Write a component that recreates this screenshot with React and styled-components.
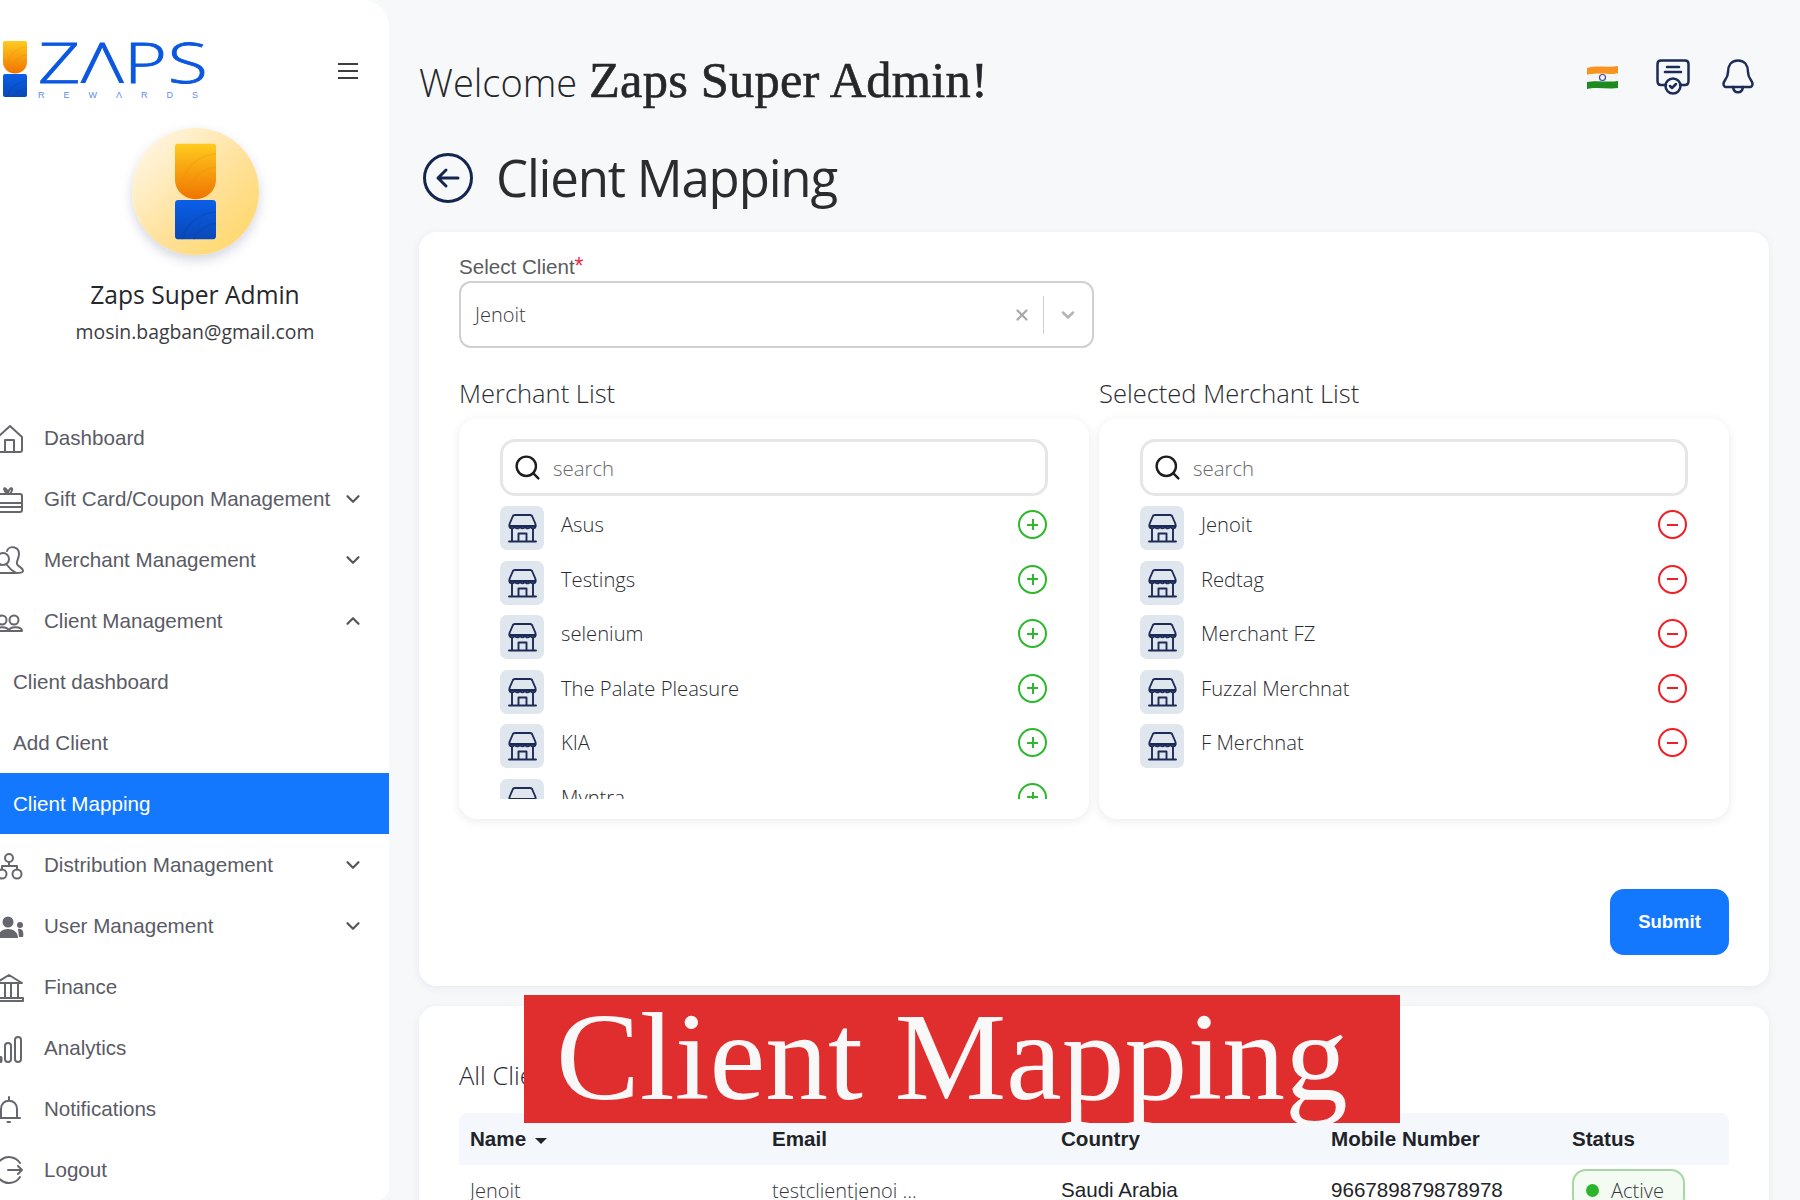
import React from 'react';
import styled, { createGlobalStyle } from 'styled-components';
import { X, ChevronDown, ChevronUp, Search } from 'lucide-react';

const GlobalStyle = createGlobalStyle`
  html, body {
    margin: 0;
    padding: 0;
    height: 1200px;
    overflow: hidden;
    background: #f7f8fa;
  }
  * { box-sizing: border-box; }
`;

const OPEN = `'Open Sans', 'Noto Sans', sans-serif`;
const ARIAL = `'Liberation Sans', Arial, sans-serif`;
const SERIF = `'Liberation Serif', 'Times New Roman', serif`;

const Page = styled.div`
  position: relative;
  display: flex;
  width: 1800px;
  height: 1200px;
  overflow: hidden;
  background: #f7f8fa;
`;

const Sidebar = styled.aside`
  flex: 0 0 389px;
  height: 1200px;
  background: #fff;
  border-radius: 0 26px 12px 0;
  overflow: hidden;
`;

const LogoRow = styled.div`
  display: flex;
  justify-content: space-between;
  align-items: flex-start;
  height: 128px;
  padding: 41px 31px 0 3px;
`;

const Logo = styled.div`
  display: flex;
  gap: 11px;
`;

const LogoWords = styled.div`
  display: flex;
  flex-direction: column;
  width: 166px;
`;

const LogoName = styled.div`
  height: 50px;
  font-family: ${OPEN};
  font-weight: 300;
  font-size: 56px;
  line-height: 41px;
  letter-spacing: 0.5px;
  color: #0b57e0;
  -webkit-text-stroke: 0.8px #0b57e0;
  transform: scaleX(1.31);
  transform-origin: left center;
`;

const LogoSub = styled.div`
  display: flex;
  justify-content: space-between;
  padding-right: 6px;
  font-family: ${ARIAL};
  font-size: 9px;
  line-height: 9px;
  color: #5f8ce8;
`;

const MenuButton = styled.button`
  display: flex;
  flex-direction: column;
  gap: 5px;
  width: 20px;
  margin-top: 22px;
  padding: 0;
  border: none;
  background: none;
  span {
    display: block;
    height: 2px;
    background: #3c3d42;
  }
`;

const Profile = styled.div`
  display: flex;
  flex-direction: column;
  align-items: center;
  height: 279px;
  padding-left: 1px;
`;

const Avatar = styled.div`
  display: flex;
  flex-direction: column;
  align-items: center;
  justify-content: center;
  width: 127px;
  height: 127px;
  border-radius: 50%;
  background: linear-gradient(135deg, #fff8ea 5%, #ffe19a 55%, #ffd766 95%);
  box-shadow: 0 5px 12px rgba(60, 70, 120, 0.22);
`;

const ProfileName = styled.div`
  margin-top: 22px;
  font-family: ${OPEN};
  font-size: 24.6px;
  line-height: 36px;
  color: #26272b;
`;

const ProfileEmail = styled.div`
  margin-top: 2px;
  font-family: ${OPEN};
  font-size: 19.4px;
  line-height: 34px;
  color: #3c3d42;
`;

const NavRow = styled.div`
  display: flex;
  align-items: center;
  height: 61px;
  padding: 0 25px 0 ${p => (p.$sub ? '13px' : '0')};
  font-family: ${ARIAL};
  font-size: 20.6px;
  color: ${p => (p.$active ? '#fff' : '#5a5b65')};
  background: ${p => (p.$active ? '#1478ff' : 'transparent')};
`;

const NavIcon = styled.svg`
  flex: 0 0 28px;
  width: 28px;
  height: 30px;
  margin: 0 21px 0 -5px;
  overflow: visible;
  fill: none;
  stroke: #66676d;
  stroke-width: 2;
  stroke-linecap: round;
  stroke-linejoin: round;
`;

const NavLabel = styled.span`
  flex: 1;
  white-space: nowrap;
`;

const Main = styled.main`
  flex: 1;
  min-width: 0;
  padding: 0 31px 0 30px;
`;

const TopBar = styled.header`
  display: flex;
  justify-content: space-between;
  align-items: flex-start;
  height: 152px;
  padding-top: 47px;
`;

const Welcome = styled.h1`
  margin: 0;
  font-family: ${OPEN};
  font-size: 38px;
  font-weight: 300;
  line-height: 66px;
  color: #26272b;
  white-space: nowrap;
`;

const WelcomeName = styled.span`
  margin-left: 2px;
  font-family: ${SERIF};
  font-size: 50.5px;
  font-weight: 400;
  letter-spacing: 0.2px;
  -webkit-text-stroke: 0.6px #26272b;
`;

const TopIcons = styled.div`
  display: flex;
  align-items: center;
  gap: 32px;
  padding: 12px 15px 0 0;
`;

const FlagSlot = styled.span`
  display: flex;
  margin-right: 5px;
`;

const TitleRow = styled.div`
  display: flex;
  align-items: center;
  gap: 23px;
  height: 52px;
  padding-left: 4px;
  margin-bottom: 28px;
`;

const PageTitle = styled.h2`
  margin: -3px 0 0;
  font-family: ${OPEN};
  font-size: 51px;
  font-weight: 400;
  line-height: 52px;
  letter-spacing: -1.2px;
  color: #2b2c30;
`;

const Card = styled.section`
  background: #fff;
  border-radius: 18px;
  box-shadow: 0 2px 8px rgba(40, 50, 80, 0.07);
`;

const FormCard = styled(Card)`
  height: 754px;
  padding: 22px 40px 30px;
  margin-bottom: 20px;
`;

const FieldLabel = styled.label`
  display: block;
  height: 27px;
  font-family: ${ARIAL};
  font-size: 20.6px;
  line-height: 24px;
  color: #5c5c60;
  em {
    font-style: normal;
    font-size: 23px;
    color: #ee2b4a;
  }
`;

const SelectBox = styled.div`
  display: flex;
  align-items: center;
  width: 635px;
  height: 67px;
  padding: 0 14px;
  border: 2px solid #d0d0d2;
  border-radius: 12px;
  font-family: ${OPEN};
  font-size: 20px;
  font-weight: 300;
  color: #3c3c40;
`;

const SelectValue = styled.span`
  flex: 1;
`;

const SelectDivider = styled.span`
  width: 1px;
  height: 38px;
  margin: 0 14px 0 12px;
  background: #cfcfd2;
`;

const Columns = styled.div`
  display: grid;
  grid-template-columns: 630px 630px;
  gap: 10px;
  margin-top: 27px;
`;

const ColumnTitle = styled.h3`
  margin: 0 0 8px;
  font-family: ${OPEN};
  font-size: 25.5px;
  font-weight: 300;
  line-height: 36px;
  color: #2b2c30;
`;

const Panel = styled.div`
  height: 400px;
  padding: 20px 41px;
  background: #fff;
  border-radius: 18px;
  box-shadow: 0 2px 10px rgba(40, 50, 80, 0.1);
`;

const SearchBox = styled.div`
  display: flex;
  align-items: center;
  gap: 11px;
  height: 57px;
  padding: 0 10px;
  border: 3px solid #e6e6e8;
  border-radius: 15px;
  font-family: ${OPEN};
  font-size: 20.4px;
  font-weight: 300;
  color: #68686c;
`;

const MerchantList = styled.ul`
  display: flex;
  flex-direction: column;
  gap: 10.6px;
  height: 293px;
  margin: 10px 0 0;
  padding: 0;
  list-style: none;
  overflow: hidden;
`;

const MerchantRow = styled.li`
  display: flex;
  flex: 0 0 44px;
  align-items: flex-start;
`;

const StoreTile = styled.div`
  display: flex;
  align-items: center;
  justify-content: center;
  flex: 0 0 44px;
  height: 44px;
  border-radius: 7px;
  background: #e0e6ee;
`;

const MerchantName = styled.span`
  flex: 1;
  padding: 4px 0 0 17px;
  font-family: ${OPEN};
  font-size: 20.2px;
  font-weight: 300;
  line-height: 28px;
  color: #2b2c30;
`;

const RoundAction = styled.div`
  display: flex;
  align-items: center;
  justify-content: center;
  width: 29px;
  height: 29px;
  margin: 4px 1px 0 0;
  border: 2px solid ${p => p.$color};
  border-radius: 50%;
  span {
    position: relative;
    display: block;
    width: 11px;
    height: 2px;
    background: ${p => p.$color};
  }
  span::after {
    content: '';
    position: absolute;
    display: ${p => (p.$plus ? 'block' : 'none')};
    left: 4.5px;
    top: -4.5px;
    width: 2px;
    height: 11px;
    background: ${p => p.$color};
  }
`;

const SubmitRow = styled.div`
  display: flex;
  justify-content: flex-end;
  margin-top: 70px;
`;

const SubmitButton = styled.button`
  width: 119px;
  height: 66px;
  border: none;
  border-radius: 14px;
  background: #1478ff;
  color: #fff;
  font-family: ${ARIAL};
  font-size: 18.5px;
  font-weight: 700;
`;

const TableCard = styled(Card)`
  height: 400px;
  padding: 51px 40px 0;
`;

const TableTitle = styled.h3`
  margin: 0 0 20px;
  font-family: ${OPEN};
  font-size: 25.5px;
  font-weight: 300;
  line-height: 36px;
  color: #2b2c30;
`;

const TableGrid = styled.div`
  display: grid;
  grid-template-columns: 302px 289px 270px 241px 1fr;
  align-items: center;
  height: ${p => (p.$head ? '52px' : '50px')};
  padding-left: 11px;
  background: ${p => (p.$head ? '#f4f8fd' : '#fff')};
  border-radius: ${p => (p.$head ? '8px 8px 0 0' : '0')};
  font-family: ${ARIAL};
  font-size: 20.6px;
  font-weight: ${p => (p.$head ? 700 : 400)};
  color: #222327;
`;

const NameCell = styled.span`
  display: flex;
  align-items: center;
  gap: 9px;
`;

const SortCaret = styled.i`
  width: 0;
  height: 0;
  margin-top: 3px;
  border: 6px solid transparent;
  border-top: 6px solid #222327;
  border-bottom: none;
`;

const LightCell = styled.span`
  font-family: ${OPEN};
  font-size: 20px;
  font-weight: 300;
  color: #36373b;
`;

const StatusPill = styled.span`
  display: inline-flex;
  align-items: center;
  gap: 12px;
  width: 113px;
  height: 42px;
  padding-left: 12px;
  border: 2px solid #a6d8a6;
  border-radius: 14px;
  background: #f3fbf3;
  font-family: ${OPEN};
  font-size: 20px;
  font-weight: 300;
  color: #36373b;
  i {
    width: 13px;
    height: 13px;
    border-radius: 50%;
    background: #2bb52b;
  }
`;

const Banner = styled.div`
  position: absolute;
  left: 524px;
  top: 995px;
  width: 876px;
  height: 128px;
  padding-left: 32px;
  overflow: hidden;
  background: #e02d2d;
  font-family: ${SERIF};
  font-size: 125.6px;
  line-height: 124px;
  color: #f8f8f8;
  white-space: nowrap;
`;

const icons = {
  home: <><path d="M3 14 L15 3 L27 14 V27 Q27 29 25 29 H5 Q3 29 3 27 Z" /><path d="M10 29 V17 H19 V29" /></>,
  gift: <><rect x="1" y="10" width="26" height="18" rx="2" /><path d="M1 19 H27 M1 23 H27" /><path d="M12 10 C6 3 11 2 13 9 C15 2 20 3 15 10" /></>,
  merchant: <><path d="M12 6 C14 0 24 1 24 9 C24 14 21 16 22 19 C23 22 28 22 28 26 C28 28 24 28 21 28" /><circle cx="8" cy="14" r="6" /><path d="M0 27 C2 23 3 22 5 20 M12 20 C15 24 17 26 21 28 H2" /></>,
  client: <><circle cx="7" cy="14" r="4.5" /><circle cx="19" cy="14" r="4.5" /><path d="M1 25 C1 20 13 20 14 25 Z" /><path d="M14 25 C14 20 27 20 27 25 Z" /></>,
  network: <><circle cx="14" cy="8" r="4" /><circle cx="7" cy="24" r="4.5" /><circle cx="22" cy="24" r="4.5" /><path d="M14 12 V16 M7 19.5 V16 H22 V19.5" /></>,
  users: <g fill="#66676d" stroke="none"><circle cx="13" cy="11" r="5.5" /><circle cx="25" cy="14" r="3" /><circle cx="2" cy="14" r="3" /><path d="M3 27 C3 15 23 15 23 27 Z" /><path d="M23 18 C28 17 29 22 28 26 H24 Z" /></g>,
  bank: <><path d="M1 11 L14 3 L27 11 Z" /><path d="M4 12 V25 M10 12 V25 M16 12 V25 M23 12 V25" /><path d="M1 26 H28 V29 H1 Z" /></>,
  bars: <><rect x="5" y="24" width="1.5" height="5" rx="0.75" /><rect x="10" y="10" width="6" height="19" rx="3" /><rect x="20" y="4" width="6" height="25" rx="3" /></>,
  bell: <><path d="M3 24 H25 M6 24 V15 C6 4 22 4 22 15 V24" /><path d="M14 3 V6 M12.5 28 H15" /></>,
  logout: <><path d="M25 8 A13 13 0 1 0 25 22" /><path d="M13 15 H27 M23 11 L27 15 L23 19" /></>
};

const navItems = [
  { label: 'Dashboard', icon: 'home' },
  { label: 'Gift Card/Coupon Management', icon: 'gift', caret: 'down' },
  { label: 'Merchant Management', icon: 'merchant', caret: 'down' },
  { label: 'Client Management', icon: 'client', caret: 'up' },
  { label: 'Client dashboard', sub: true },
  { label: 'Add Client', sub: true },
  { label: 'Client Mapping', sub: true, active: true },
  { label: 'Distribution Management', icon: 'network', caret: 'down' },
  { label: 'User Management', icon: 'users', caret: 'down' },
  { label: 'Finance', icon: 'bank' },
  { label: 'Analytics', icon: 'bars' },
  { label: 'Notifications', icon: 'bell' },
  { label: 'Logout', icon: 'logout' }
];

const merchants = ['Asus', 'Testings', 'selenium', 'The Palate Pleasure', 'KIA', 'Myntra'];
const selectedMerchants = ['Jenoit', 'Redtag', 'Merchant FZ', 'Fuzzal Merchnat', 'F Merchnat'];

const BrandMark = ({ width, height }) => (
  <svg width={width} height={height} viewBox="0 0 24 56">
    <defs>
      <linearGradient id="markTop" x1="0" y1="0" x2="0" y2="1">
        <stop offset="0" stopColor="#ffcb1f" />
        <stop offset="1" stopColor="#ef7400" />
      </linearGradient>
      <linearGradient id="markBottom" x1="0" y1="0" x2="0" y2="1">
        <stop offset="0" stopColor="#0a5fe8" />
        <stop offset="1" stopColor="#0a48b8" />
      </linearGradient>
    </defs>
    <path d="M1.5 0 H22.5 Q24 0 24 1.5 V21 C24 28 18 32.5 12 32.5 C6 32.5 0 28 0 21 V1.5 Q0 0 1.5 0 Z" fill="url(#markTop)" />
    <path d="M24 6 C16 6 7 12 3 24 M24 14 C18 14 11 18 8 28" fill="none" stroke="#e88a00" strokeOpacity="0.18" strokeWidth="1.2" />
    <rect x="0" y="33" width="24" height="23" rx="2" fill="url(#markBottom)" />
    <path d="M24 40 C16 40 7 46 4 56 M24 47 C19 47 13 51 11 56" fill="none" stroke="#0a3c9c" strokeOpacity="0.25" strokeWidth="1.2" />
  </svg>
);

const StoreIcon = () => (
  <svg width="29" height="30" viewBox="0 0 29 30" fill="none" stroke="#1c2b57" strokeWidth="1.9" strokeLinecap="round" strokeLinejoin="round">
    <path d="M7 2 H22 Q24 2 24.5 4 L27.5 11 V13 H1.5 V11 L4.5 4 Q5 2 7 2 Z" />
    <path d="M1.5 13 C1.5 16 6.5 16 6.7 13 C7 16 11.5 16 11.9 13 C12.2 16 16.8 16 17.1 13 C17.5 16 22 16 22.3 13 C22.5 16 27.5 16 27.5 13" />
    <path d="M4 16 V28.5 M25 16 V28.5 M1 28.5 H28 M10.5 28.5 V20.5 H18.5 V28.5" />
  </svg>
);

const FlagIcon = () => (
  <svg width="33" height="24" viewBox="0 0 33 24">
    <path d="M1 3 C10 0 22 3 32 1 V8.5 C22 10 10 7.5 1 10 Z" fill="#f79420" />
    <path d="M1 10 C10 7.5 22 10 32 8.5 V16 C22 17.5 10 15 1 17 Z" fill="#f4f4f4" />
    <path d="M1 17 C10 15 22 17.5 32 16 V23 C22 24.5 10 21.5 1 24 Z" fill="#1f8a1f" />
    <circle cx="16.5" cy="12.5" r="3" fill="none" stroke="#3b4aa8" strokeWidth="1.2" />
  </svg>
);

const CertIcon = () => (
  <svg width="34" height="36" viewBox="0 0 34 36" fill="none" stroke="#1c2b57" strokeWidth="2.5" strokeLinecap="round" strokeLinejoin="round">
    <path d="M10 26 H5 Q1.5 26 1.5 22 V5 Q1.5 1.5 5 1.5 H29 Q32.5 1.5 32.5 5 V22 Q32.5 26 29 26 H24" />
    <path d="M11 8 H23 M9 13 H25" />
    <circle cx="17" cy="27" r="7.5" />
    <path d="M14 27 L16 29 L20 25" />
  </svg>
);

const BellIcon = () => (
  <svg width="32" height="36" viewBox="0 0 32 36" fill="none" stroke="#1c2b57" strokeWidth="2.5" strokeLinecap="round" strokeLinejoin="round">
    <path d="M16 1.5 C9 1.5 6 7 6 13 C6 20 1.5 21 1.5 25 C1.5 28 3 28 6 28 H26 C29 28 30.5 28 30.5 25 C30.5 21 26 20 26 13 C26 7 23 1.5 16 1.5 Z" />
    <path d="M11 28 C12 35 20 35 21 28" />
  </svg>
);

const BackIcon = () => (
  <svg width="50" height="50" viewBox="0 0 50 50" fill="none" stroke="#142550" strokeWidth="3" strokeLinecap="round" strokeLinejoin="round">
    <circle cx="25" cy="25" r="23.5" />
    <path d="M35 25 H15 M23 17 L15 25 L23 33" />
  </svg>
);

const NavEntry = ({ label, icon, caret, sub, active }) => (
  <NavRow $sub={sub} $active={active}>
    {icon && <NavIcon viewBox="0 0 28 30">{icons[icon]}</NavIcon>}
    <NavLabel>{label}</NavLabel>
    {caret === 'down' && <ChevronDown size={22} color="#55565c" strokeWidth={2.4} />}
    {caret === 'up' && <ChevronUp size={22} color="#55565c" strokeWidth={2.4} />}
  </NavRow>
);

const MerchantPanel = ({ title, items, actionColor, plus }) => (
  <div>
    <ColumnTitle>{title}</ColumnTitle>
    <Panel>
      <SearchBox>
        <Search size={29} color="#1d1d20" strokeWidth={2} />
        search
      </SearchBox>
      <MerchantList>
        {items.map(item => (
          <MerchantRow key={item}>
            <StoreTile><StoreIcon /></StoreTile>
            <MerchantName>{item}</MerchantName>
            <RoundAction $color={actionColor} $plus={plus}><span /></RoundAction>
          </MerchantRow>
        ))}
      </MerchantList>
    </Panel>
  </div>
);

export default function App() {
  return (
    <Page>
      <GlobalStyle />
      <Sidebar>
        <LogoRow>
          <Logo>
            <BrandMark width={24} height={56} />
            <LogoWords>
              <LogoName>ZΛPS</LogoName>
              <LogoSub>
                {['R', 'E', 'W', 'Λ', 'R', 'D', 'S'].map((letter, i) => <span key={i}>{letter}</span>)}
              </LogoSub>
            </LogoWords>
          </Logo>
          <MenuButton><span /><span /><span /></MenuButton>
        </LogoRow>
        <Profile>
          <Avatar><BrandMark width={41} height={97} /></Avatar>
          <ProfileName>Zaps Super Admin</ProfileName>
          <ProfileEmail>mosin.bagban@gmail.com</ProfileEmail>
        </Profile>
        <nav>
          {navItems.map(item => <NavEntry key={item.label} {...item} />)}
        </nav>
      </Sidebar>
      <Main>
        <TopBar>
          <Welcome>Welcome <WelcomeName>Zaps Super Admin!</WelcomeName></Welcome>
          <TopIcons>
            <FlagSlot><FlagIcon /></FlagSlot>
            <CertIcon />
            <BellIcon />
          </TopIcons>
        </TopBar>
        <TitleRow>
          <BackIcon />
          <PageTitle>Client Mapping</PageTitle>
        </TitleRow>
        <FormCard>
          <FieldLabel>Select Client<em>*</em></FieldLabel>
          <SelectBox>
            <SelectValue>Jenoit</SelectValue>
            <X size={18} color="#a9a9ac" strokeWidth={3} />
            <SelectDivider />
            <ChevronDown size={20} color="#b4b4b7" strokeWidth={3} />
          </SelectBox>
          <Columns>
            <MerchantPanel title="Merchant List" items={merchants} actionColor="#2db82d" plus />
            <MerchantPanel title="Selected Merchant List" items={selectedMerchants} actionColor="#f01f25" />
          </Columns>
          <SubmitRow><SubmitButton>Submit</SubmitButton></SubmitRow>
        </FormCard>
        <TableCard>
          <TableTitle>All Clients</TableTitle>
          <TableGrid $head>
            <NameCell>Name <SortCaret /></NameCell>
            <span>Email</span>
            <span>Country</span>
            <span>Mobile Number</span>
            <span>Status</span>
          </TableGrid>
          <TableGrid>
            <LightCell>Jenoit</LightCell>
            <LightCell>testclientjenoi ...</LightCell>
            <span>Saudi Arabia</span>
            <span>966789879878978</span>
            <StatusPill><i />Active</StatusPill>
          </TableGrid>
        </TableCard>
      </Main>
      <Banner>Client Mapping</Banner>
    </Page>
  );
}
